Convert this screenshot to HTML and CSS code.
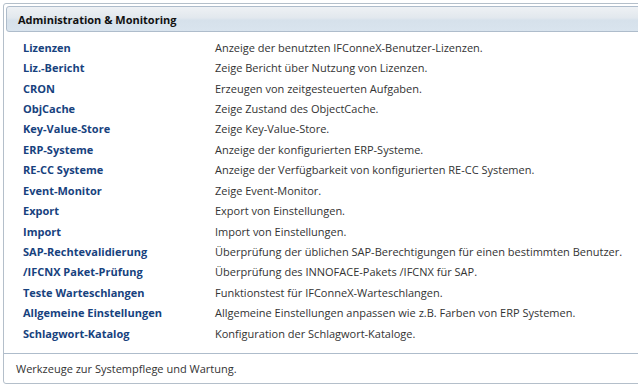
FILE: index.html
```html
<!DOCTYPE html>
<html lang="de">
<head>
    <meta charset="UTF-8">
    <meta name="viewport" content="width=device-width, initial-scale=1.0">
    <title>Administration &amp; Monitoring</title>
    <link rel="stylesheet" href="styles.css">
</head>
<body>
<div class="panel">
    <div class="panel-header">Administration &amp; Monitoring</div>
    <div class="panel-body">
        <div class="row"><a href="#">Lizenzen</a><span>Anzeige der benutzten IFConneX-Benutzer-Lizenzen.</span></div>
        <div class="row"><a href="#">Liz.-Bericht</a><span>Zeige Bericht über Nutzung von Lizenzen.</span></div>
        <div class="row"><a href="#">CRON</a><span>Erzeugen von zeitgesteuerten Aufgaben.</span></div>
        <div class="row"><a href="#">ObjCache</a><span>Zeige Zustand des ObjectCache.</span></div>
        <div class="row"><a href="#">Key-Value-Store</a><span>Zeige Key-Value-Store.</span></div>
        <div class="row"><a href="#">ERP-Systeme</a><span>Anzeige der konfigurierten ERP-Systeme.</span></div>
        <div class="row"><a href="#">RE-CC Systeme</a><span>Anzeige der Verfügbarkeit von konfigurierten RE-CC Systemen.</span></div>
        <div class="row"><a href="#">Event-Monitor</a><span>Zeige Event-Monitor.</span></div>
        <div class="row"><a href="#">Export</a><span>Export von Einstellungen.</span></div>
        <div class="row"><a href="#">Import</a><span>Import von Einstellungen.</span></div>
        <div class="row"><a href="#">SAP-Rechtevalidierung</a><span>Überprüfung der üblichen SAP-Berechtigungen für einen bestimmten Benutzer.</span></div>
        <div class="row"><a href="#">/IFCNX Paket-Prüfung</a><span>Überprüfung des INNOFACE-Pakets /IFCNX für SAP.</span></div>
        <div class="row"><a href="#">Teste Warteschlangen</a><span>Funktionstest für IFConneX-Warteschlangen.</span></div>
        <div class="row"><a href="#">Allgemeine Einstellungen</a><span>Allgemeine Einstellungen anpassen wie z.B. Farben von ERP Systemen.</span></div>
        <div class="row"><a href="#">Schlagwort-Katalog</a><span>Konfiguration der Schlagwort-Kataloge.</span></div>
    </div>
    <div class="panel-footer">Werkzeuge zur Systempflege und Wartung.</div>
</div>
</body>
</html>
```

FILE: styles.css
```css
body {
    font-family: "Open Sans", "Noto Sans", sans-serif;
    font-size: 11px;
    color: #333;
    background-color: #fff;
    margin: 0;
    padding: 0;
    overflow: hidden;
}
.panel {
    margin: 3px -6px 0 3px;
    border: 1px solid #b4bfca;
    border-radius: 3px;
    padding: 2px;
    height: 381px;
    display: flex;
    flex-direction: column;
    box-sizing: border-box;
}
.panel-header {
    height: 26px;
    box-sizing: border-box;
    border: 1px solid #aebccb;
    border-radius: 3px;
    background: linear-gradient(#eef1f4 0%, #e2e8ee 45%, #d6e1eb 55%, #d9e4ee 100%);
    padding-left: 11px;
    display: flex;
    align-items: center;
    font-weight: bold;
    color: #111;
}
.panel-body {
    padding: 5px 0 0 17px;
    flex: 1;
}
.row {
    display: flex;
    height: 20.43px;
    align-items: center;
}
.row a {
    width: 192px;
    color: #17427e;
    font-weight: bold;
    text-decoration: none;
}
.panel-footer {
    border-top: 1px solid #aebccb;
    margin: 0 -2px -2px -2px;
    height: 29px;
    padding-left: 12px;
    display: flex;
    align-items: center;
}
```
